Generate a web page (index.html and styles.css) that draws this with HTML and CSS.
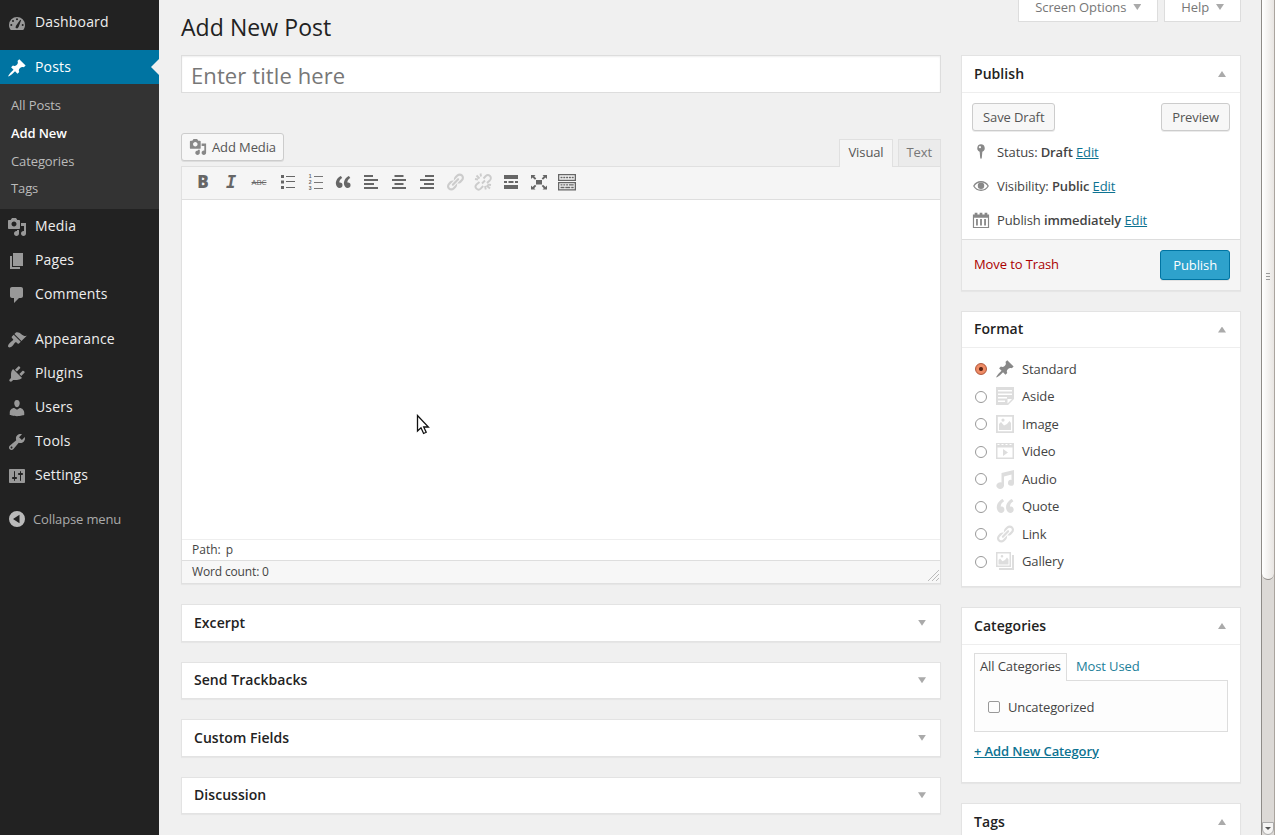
FILE: index.html
```
<!DOCTYPE html>
<html lang="en">
<head>
    <meta charset="UTF-8">
    <meta name="viewport" content="width=device-width, initial-scale=1.0">
    <title>Add New Post</title>
    <link rel="stylesheet" href="styles.css">
</head>
<body>
    <!-- icon set -->
    <svg class="sprite" xmlns="http://www.w3.org/2000/svg">
        <symbol id="dashboard" viewBox="0 0 20 20"><path fill-rule="evenodd" d="M3.8 17h12.4c1.1-1.4 1.8-3.1 1.8-5a8 8 0 0 0-16 0c0 1.9.7 3.600 1.800 5zM9 6.200a1 1 0 1 1 2 0a1 1 0 1 1-2 0zM5 8a1 1 0 1 1 2 0a1 1 0 1 1-2 0zM3.300 12a1 1 0 1 1 2 0a1 1 0 1 1-2 0zM14.700 12a1 1 0 1 1 2 0a1 1 0 1 1-2 0zM8.500 14.500l.5-1.800L13.200 6.800l.9.400L11.700 13.800l-1 1.500h-1.600z"/></symbol>
        <symbol id="pin" viewBox="0 0 20 20"><path d="M10.440 3.020l1.820-1.820 6.360 6.350-1.830 1.820c-1.050-.68-2.480-.57-3.410.36l-.75.75c-.92.93-1.040 2.350-.35 3.410l-1.830 1.820-2.410-2.410-2.800 2.790c-.42.42-3.380 2.710-3.800 2.290s1.860-3.390 2.280-3.810l2.790-2.790L4.100 9.360l1.830-1.820c1.050.69 2.480.57 3.400-.36l.75-.75c.93-.92 1.050-2.350.36-3.410z"/></symbol>
        <symbol id="media" viewBox="0 0 20 20"><path d="M13 11V4c0-.55-.45-1-1-1h-1.670L9 1H5L3.670 3H2c-.55 0-1 .45-1 1v7c0 .55.45 1 1 1h10c.55 0 1-.45 1-1zM7 4.500c1.380 0 2.500 1.120 2.500 2.500S8.380 9.500 7 9.500 4.500 8.380 4.500 7 5.620 4.500 7 4.500zM14 6h5v10.500c0 1.380-1.120 2.500-2.500 2.500S14 17.880 14 16.500s1.120-2.500 2.500-2.500c.17 0 .34.02.5.05V9h-3V6zm-4 8.050V13h2v3.500c0 1.380-1.120 2.500-2.500 2.500S7 17.880 7 16.500 8.120 14 9.500 14c.17 0 .34.02.5.05z"/></symbol>
        <symbol id="page" viewBox="0 0 20 20"><path d="M6 15V2h10v13H6zm-1 1h8v2H3V5h2v11z"/></symbol>
        <symbol id="comment" viewBox="0 0 20 20"><path d="M5 2h9c1.100 0 2 .9 2 2v7c0 1.100-.9 2-2 2h-2l-5 5v-5H5c-1.100 0-2-.9-2-2V4c0-1.100.9-2 2-2z"/></symbol>
        <symbol id="brush" viewBox="0 0 20 20"><path d="M14.480 11.060L7.410 3.990l1.500-1.500c.5-.56 2.300-.47 3.510.32 1.210.8 1.430 1.280 2.910 2.100 1.180.64 2.450 1.260 4.450.85zm-.71.71L6.700 4.700 4.930 6.470c-.39.39-.39 1.020 0 1.410l1.060 1.060c.39.39.39 1.030 0 1.420-.6.6-1.430 1.110-2.210 1.690-.35.26-.7.53-1.010.84C1.430 14.230.4 16.080 1.400 17.070c.99 1 2.840-.03 4.180-1.360.31-.31.58-.66.85-1.020.57-.78 1.080-1.610 1.690-2.210.39-.39 1.020-.39 1.410 0l1.060 1.060c.39.39 1.020.39 1.410 0z"/></symbol>
        <symbol id="plug" viewBox="0 0 20 20"><path d="M13.110 4.360L9.870 7.600 8 5.730l3.240-3.240c.35-.34 1.050-.2 1.560.32.52.51.66 1.210.31 1.550zm-8 1.770l.91-1.120 9.010 9.010-1.190.84c-.71.71-2.630 1.160-3.820 1.160H6.140L4.900 17.260c-.59.59-1.540.59-2.120 0-.59-.58-.59-1.530 0-2.120l1.240-1.240v-3.880c0-1.130.4-3.190 1.090-3.890zm7.260 3.970l3.240-3.240c.34-.35 1.040-.21 1.550.31.52.51.66 1.210.31 1.550l-3.240 3.250z"/></symbol>
        <symbol id="user" viewBox="0 0 20 20"><path d="M10 9.250c-2.270 0-2.730-3.440-2.730-3.440C7 4.020 7.820 2 9.970 2c2.160 0 2.980 2.020 2.710 3.810 0 0-.41 3.440-2.680 3.440zm0 2.570L12.720 10c2.390 0 4.520 2.330 4.520 4.530v2.490s-3.650 1.130-7.240 1.130c-3.650 0-7.240-1.130-7.240-1.130v-2.490c0-2.250 1.940-4.480 4.470-4.480z"/></symbol>
        <symbol id="wrench" viewBox="0 0 20 20"><path d="M16.680 9.770c-1.340 1.340-3.300 1.670-4.950.99l-5.410 6.520c-.99.99-2.590.99-3.580 0s-.99-2.590 0-3.570l6.520-5.420c-.68-1.650-.35-3.610.99-4.950 1.280-1.280 3.120-1.620 4.720-1.060l-2.890 2.890 2.820 2.820 2.860-2.870c.53 1.580.18 3.390-1.080 4.650zM3.810 16.210c.4.39 1.040.39 1.430 0 .4-.4.4-1.040 0-1.430-.39-.4-1.030-.4-1.430 0-.39.39-.39 1.030 0 1.430z"/></symbol>
        <symbol id="sliders" viewBox="0 0 20 20"><path d="M18 16V4c0-.55-.45-1-1-1H3c-.55 0-1 .45-1 1v12c0 .55.45 1 1 1h14c.55 0 1-.45 1-1zM8 11h1c.55 0 1 .45 1 1s-.45 1-1 1H8v1.500c0 .28-.22.5-.5.5s-.5-.22-.5-.5V13H6c-.55 0-1-.45-1-1s.45-1 1-1h1V5.500c0-.28.22-.5.5-.5s.5.22.5.5V11zm5-2h-1c-.55 0-1-.45-1-1s.45-1 1-1h1V5.500c0-.28.22-.5.5-.5s.5.22.5.5V7h1c.55 0 1 .45 1 1s-.45 1-1 1h-1v5.500c0 .28-.22.5-.5.5s-.5-.22-.5-.5V9z"/></symbol>
        <symbol id="collapse" viewBox="0 0 20 20"><path fill-rule="evenodd" d="M10 2a8 8 0 1 0 0 16a8 8 0 0 0 0-16zM12.500 5.800v8.400L6 10z"/></symbol>
        <symbol id="list-ul" viewBox="0 0 20 20"><path d="M4 3h3v3H4zM4 8.500h3v3H4zM4 14h3v3H4zM9 4h9v1H9zM9 9h9v1H9zM9 15h9v1H9z"/></symbol>
        <symbol id="quote" viewBox="0 0 20 20"><path d="M9.490 13.220c0-.74-.2-1.380-.61-1.900-.62-.78-1.830-.88-2.530-.72-.29-1.650 1.110-3.750 2.920-4.650L7.880 4c-2.730 1.300-5.420 4.280-4.960 8.050C3.210 14.430 4.590 16 6.540 16c.85 0 1.560-.25 2.120-.75s.83-1.180.83-2.030zm8.050 0c0-.74-.2-1.380-.61-1.900-.63-.78-1.830-.88-2.530-.72-.29-1.650 1.110-3.750 2.920-4.650L15.930 4c-2.730 1.300-5.410 4.280-4.950 8.050.29 2.380 1.660 3.950 3.610 3.950.85 0 1.560-.25 2.120-.75s.83-1.180.83-2.030z"/></symbol>
        <symbol id="align-left" viewBox="0 0 20 20"><path d="M3 3h9v2H3zM3 7h14v2H3zM3 11h10v2H3zM3 15h14v2H3z"/></symbol>
        <symbol id="align-center" viewBox="0 0 20 20"><path d="M5.500 3h9v2h-9zM3 7h14v2H3zM5.500 11h9v2h-9zM3 15h14v2H3z"/></symbol>
        <symbol id="align-right" viewBox="0 0 20 20"><path d="M8 3h9v2H8zM3 7h14v2H3zM7 11h10v2H7zM3 15h14v2H3z"/></symbol>
        <symbol id="link" viewBox="0 0 20 20"><path d="M17.740 2.760c1.680 1.690 1.680 4.410 0 6.100l-1.530 1.520c-1.120 1.120-2.700 1.470-4.140 1.090l2.620-2.610.76-.77.76-.76c.84-.84.84-2.200 0-3.040-.84-.85-2.200-.85-3.040 0l-.77.76-3.380 3.380c-.37-1.440-.02-3.020 1.100-4.140l1.520-1.530c1.690-1.680 4.420-1.680 6.100 0zM8.590 13.430l5.340-5.340c.42-.42.42-1.100 0-1.520-.44-.43-1.130-.39-1.530 0l-5.330 5.340c-.42.42-.42 1.100 0 1.520.44.43 1.130.39 1.520 0zm-.76 2.290l4.140-4.150c.38 1.440.03 3.020-1.090 4.140l-1.520 1.530c-1.690 1.680-4.410 1.680-6.100 0-1.680-1.680-1.680-4.420 0-6.100l1.530-1.520c1.120-1.120 2.700-1.470 4.140-1.100l-4.140 4.150c-.85.84-.85 2.200 0 3.050.84.84 2.200.84 3.040 0z"/></symbol>
        <symbol id="unlink" viewBox="0 0 20 20"><path fill="none" stroke="currentColor" stroke-width="1.900" d="M10.500 6.500l2.300-2.500a2.900 2.900 0 0 1 4.200 4.200l-3 2.800M6.500 10l-3 2.500a2.900 2.900 0 0 0 4.200 4.200l2.500-2.700M9 11.500l3-3M2 7l3 .5M3.500 3.500l3 3M7.500 1.500l.5 3M12 14l.8 3.500M13.500 13.500l3.500 3M14.500 12.500l3.500.5"/></symbol>
        <symbol id="more" viewBox="0 0 20 20"><path d="M3 3h14v4H3zM3 9h3v2H3zM7.500 9h5v2h-5zM14 9h3v2h-3zM3 13h14v4H3z"/></symbol>
        <symbol id="fullscreen" viewBox="0 0 20 20"><path d="M7 8h6v4.500H7zM2 3h4.500L5.200 4.300 7.300 6.500 6 7.800 3.500 5.500 2 7zM18 3v4l-1.500-1.500L14 7.800l-1.300-1.300 2.100-2.200L13.500 3zM2 17.500v-4L3.500 15 6 12.700 7.300 14l-2.100 2.200 1.300 1.300zM18 17.500h-4.500l1.300-1.300-2.100-2.200 1.300-1.300 2.500 2.300 1.500-1.500z"/></symbol>
        <symbol id="kitchensink" viewBox="0 0 20 20"><path fill-rule="evenodd" d="M1 2h18v7H1zM2.300 3.300v4.400h15.400V3.300zM3.500 4.800h2v1.500h-2zM6.300 4.800h2v1.500h-2zM9.100 4.800h2v1.500h-2zM11.900 4.800h2v1.500h-2zM14.700 4.800h2v1.500h-2zM1 10h18v8.500H1zM2.300 11.300v5.900h15.400v-5.900zM3.500 12.200h2v1.400h-2zM6.300 12.200h2v1.400h-2zM9.100 12.200h2v1.400h-2zM11.900 12.200h4.800v1.400h-4.800zM3.500 14.800h4v1.400h-4zM8.300 14.800h5v1.400h-5zM14.200 14.800h2.500v1.400h-2.500z"/></symbol>
        <symbol id="status" viewBox="0 0 20 20"><path fill-rule="evenodd" d="M10 1.500a4.200 4.200 0 0 1 1.500 8.100l-.6 6.900-.9 1.500-.9-1.500-.6-6.900A4.200 4.200 0 0 1 10 1.500zM8.200 3.500a1.200 1.200 0 1 0 1.800 1.300a1.200 1.200 0 0 0-1.800-1.300z"/></symbol>
        <symbol id="eye" viewBox="0 0 20 20"><path fill="none" stroke="currentColor" stroke-width="1.400" d="M2 10c3.500-6.300 12.500-6.300 16 0c-3.500 6.300-12.500 6.300-16 0z"/><circle cx="10" cy="9.800" r="3.600"/></symbol>
        <symbol id="calendar" viewBox="0 0 20 20"><path fill-rule="evenodd" d="M1 4h2V2h3v2h2.500V2h3v2H14V2h3v2h2v15H1zM2.300 7.500v10.200h15.400V7.500zM4.500 9h2v7h-2zM9 9h2v7H9zM13.500 9h2v7h-2z"/></symbol>
        <symbol id="aside" viewBox="0 0 20 20"><path fill-rule="evenodd" d="M1 1h18v12l-6 6H1zM3 4v1.500h14V4zM3 7.500V9h14V7.500zM3 11v1.500h9V11zM3 14.500V16h7v-1.500zM12.500 13v4.500L17 13z"/></symbol>
        <symbol id="image" viewBox="0 0 20 20"><path fill-rule="evenodd" d="M1 1h18v18H1zM2.800 2.800v14.400h14.400V2.800zM4 16V10l2-2 3 3.500 3-1.500 2.500-3 1.500 2v7zM8 4.500a1.600 1.600 0 1 1 0 3.200a1.600 1.600 0 0 1 0-3.200z"/></symbol>
        <symbol id="video" viewBox="0 0 20 20"><path fill-rule="evenodd" d="M1 2h18v16H1zM2.500 3v1h2V3zM6.500 3v1h2V3zM10.500 3v1h2V3zM14.500 3v1h2V3zM2.500 6.500v10h15v-10zM8 8l5 3.500L8 15z"/></symbol>
        <symbol id="audio" viewBox="0 0 20 20"><path d="M19 1v12.800a3 3 0 1 1-2.500-2.900V5.500L9 7.500v9a3.800 3.300 0 1 1-2.500-3V4z"/></symbol>
        <symbol id="gallery" viewBox="0 0 20 20"><path fill-rule="evenodd" d="M1 1h15v15H1zM2.500 2.500v12h12v-12zM3.500 13.500V9L5 7.500l2.500 2.800L10 9l2-2.500 1.500 2v5zM7 4a1.300 1.300 0 1 1 0 2.600A1.300 1.300 0 0 1 7 4zM17 4h2v15H4v-2h13z"/></symbol>
    </svg>

    <nav class="menu">
        <a class="menu-item"><svg class="icon"><use href="#dashboard"/></svg>Dashboard</a>
        <a class="menu-item active gap"><svg class="icon"><use href="#pin"/></svg>Posts</a>
        <div class="submenu">
            <a>All Posts</a>
            <a class="current">Add New</a>
            <a>Categories</a>
            <a>Tags</a>
        </div>
        <a class="menu-item"><svg class="icon"><use href="#media"/></svg>Media</a>
        <a class="menu-item"><svg class="icon"><use href="#page"/></svg>Pages</a>
        <a class="menu-item"><svg class="icon"><use href="#comment"/></svg>Comments</a>
        <a class="menu-item gap"><svg class="icon"><use href="#brush"/></svg>Appearance</a>
        <a class="menu-item"><svg class="icon"><use href="#plug"/></svg>Plugins</a>
        <a class="menu-item"><svg class="icon"><use href="#user"/></svg>Users</a>
        <a class="menu-item"><svg class="icon"><use href="#wrench"/></svg>Tools</a>
        <a class="menu-item"><svg class="icon"><use href="#sliders"/></svg>Settings</a>
        <a class="menu-item collapse"><svg class="icon"><use href="#collapse"/></svg>Collapse menu</a>
    </nav>

    <main class="content">
        <header class="page-head">
            <h1>Add New Post</h1>
            <div class="screen-links">
                <a>Screen Options<span class="arrow down"></span></a>
                <a>Help<span class="arrow down"></span></a>
            </div>
        </header>

        <div class="columns">
            <section class="main-col">
                <input class="title-input" type="text" placeholder="Enter title here">

                <div class="editor-tools">
                    <button class="button add-media"><svg class="icon"><use href="#media"/></svg>Add Media</button>
                    <div class="tabs">
                        <a class="tab tab-active">Visual</a>
                        <a class="tab">Text</a>
                    </div>
                </div>

                <div class="editor">
                    <div class="toolbar">
                        <span class="tool bold">B</span>
                        <span class="tool italic">I</span>
                        <span class="tool strike">ABC</span>
                        <span class="tool"><svg class="icon"><use href="#list-ul"/></svg></span>
                        <span class="tool numbered">
                            <span>1</span><i></i>
                            <span>2</span><i></i>
                            <span>3</span><i></i>
                        </span>
                        <span class="tool"><svg class="icon"><use href="#quote"/></svg></span>
                        <span class="tool"><svg class="icon"><use href="#align-left"/></svg></span>
                        <span class="tool"><svg class="icon"><use href="#align-center"/></svg></span>
                        <span class="tool"><svg class="icon"><use href="#align-right"/></svg></span>
                        <span class="tool disabled"><svg class="icon"><use href="#link"/></svg></span>
                        <span class="tool disabled"><svg class="icon"><use href="#unlink"/></svg></span>
                        <span class="tool"><svg class="icon"><use href="#more"/></svg></span>
                        <span class="tool"><svg class="icon"><use href="#fullscreen"/></svg></span>
                        <span class="tool"><svg class="icon"><use href="#kitchensink"/></svg></span>
                    </div>
                    <div class="canvas"></div>
                    <div class="path">Path: <span>p</span></div>
                    <div class="word-count">
                        <span>Word count: 0</span>
                        <svg class="grip" viewBox="0 0 12 12"><path d="M1 12L12 1M5 12l7-7M9 12l3-3"/></svg>
                    </div>
                </div>

                <div class="box closed"><h3>Excerpt</h3><span class="arrow down"></span></div>
                <div class="box closed"><h3>Send Trackbacks</h3><span class="arrow down"></span></div>
                <div class="box closed"><h3>Custom Fields</h3><span class="arrow down"></span></div>
                <div class="box closed"><h3>Discussion</h3><span class="arrow down"></span></div>
            </section>

            <aside class="side-col">
                <div class="box publish">
                    <div class="box-head"><h3>Publish</h3><span class="arrow up"></span></div>
                    <div class="publish-actions">
                        <button class="button">Save Draft</button>
                        <button class="button">Preview</button>
                    </div>
                    <div class="publish-row"><svg class="icon"><use href="#status"/></svg><p>Status: <b>Draft</b> <a>Edit</a></p></div>
                    <div class="publish-row"><svg class="icon"><use href="#eye"/></svg><p>Visibility: <b>Public</b> <a>Edit</a></p></div>
                    <div class="publish-row"><svg class="icon"><use href="#calendar"/></svg><p>Publish <b>immediately</b> <a>Edit</a></p></div>
                    <div class="publish-foot">
                        <a class="trash">Move to Trash</a>
                        <button class="button primary">Publish</button>
                    </div>
                </div>

                <div class="box format">
                    <div class="box-head"><h3>Format</h3><span class="arrow up"></span></div>
                    <div class="formats">
                        <label class="checked"><span class="radio"></span><svg class="icon"><use href="#pin"/></svg>Standard</label>
                        <label><span class="radio"></span><svg class="icon"><use href="#aside"/></svg>Aside</label>
                        <label><span class="radio"></span><svg class="icon"><use href="#image"/></svg>Image</label>
                        <label><span class="radio"></span><svg class="icon"><use href="#video"/></svg>Video</label>
                        <label><span class="radio"></span><svg class="icon"><use href="#audio"/></svg>Audio</label>
                        <label><span class="radio"></span><svg class="icon quote"><use href="#quote"/></svg>Quote</label>
                        <label><span class="radio"></span><svg class="icon"><use href="#link"/></svg>Link</label>
                        <label><span class="radio"></span><svg class="icon"><use href="#gallery"/></svg>Gallery</label>
                    </div>
                </div>

                <div class="box categories">
                    <div class="box-head"><h3>Categories</h3><span class="arrow up"></span></div>
                    <div class="cat-tabs">
                        <a class="cat-tab-active">All Categories</a>
                        <a>Most Used</a>
                    </div>
                    <div class="cat-list"><span class="checkbox"></span>Uncategorized</div>
                    <a class="add-cat">+ Add New Category</a>
                </div>

                <div class="box">
                    <div class="box-head"><h3>Tags</h3><span class="arrow up"></span></div>
                </div>
            </aside>
        </div>
    </main>

    <div class="scrollbar">
        <div class="thumb"><i></i><i></i><i></i></div>
        <div class="scroll-button"><span></span></div>
    </div>

    <svg class="cursor" viewBox="0 0 14 21"><path d="M1.500 1.500v15.500l3.500-3.200 2.600 5.700 2.600-1.200-2.500-5.300h4.700z"/></svg>
</body>
</html>
```
FILE: styles.css
```
* {
    box-sizing: border-box;
}
body {
    display: flex;
    height: 835px;
    margin: 0;
    overflow: hidden;
    background: #f0f0f0;
    color: #444;
    font: 13px/18px "Open Sans", sans-serif;
    letter-spacing: -.11px;
}
h1, h3, p {
    margin: 0;
}
b, h3 {
    font-weight: 600;
}
.sprite {
    position: absolute;
    width: 0;
    height: 0;
}
.icon {
    flex: none;
    width: 20px;
    height: 20px;
    fill: currentColor;
}

/* admin menu */
.menu {
    flex: none;
    width: 159px;
    padding-top: 5px;
    background: #222;
}
.menu-item {
    display: flex;
    align-items: center;
    height: 34px;
    padding-left: 7px;
    color: #eee;
    font-size: 14px;
    letter-spacing: .16px;
}
.menu-item .icon {
    margin: 2px 8px 0 0;
    color: #999;
}
.gap {
    margin-top: 11px;
}
.menu .active {
    position: relative;
    background: #0074a2;
    color: #fff;
}
.active .icon {
    color: #fff;
}
.active::after {
    content: "";
    position: absolute;
    right: 0;
    top: 9px;
    border: 8px solid transparent;
    border-left: 0;
    border-right-color: #f0f0f0;
}
.submenu {
    height: 125px;
    padding: 7px 11px;
    background: #333;
}
.submenu a {
    display: block;
    height: 27.750px;
    line-height: 28px;
    color: #bbb;
}
.submenu .current {
    color: #fff;
    font-weight: 600;
}
.collapse {
    margin-top: 10px;
    color: #aaa;
    font-size: 13px;
    letter-spacing: -.13px;
}
.collapse .icon {
    margin: 0 6px 0 0;
    color: #bbb;
}

/* page */
.content {
    flex: none;
    width: 1082px;
    padding-left: 22px;
}
.page-head {
    display: flex;
    justify-content: space-between;
    height: 55px;
}
h1 {
    padding-top: 12px;
    color: #222;
    font-size: 23px;
    font-weight: 400;
    line-height: 30px;
    letter-spacing: .07px;
}
.screen-links {
    display: flex;
    gap: 6px;
}
.screen-links a {
    display: flex;
    height: 22px;
    padding: 0 16px;
    border: 1px solid #ddd;
    border-top: 0;
    background: #fff;
    color: #777;
    line-height: 15px;
}
.screen-links .arrow {
    margin: 4px 0 0 7px;
}
.arrow {
    width: 8px;
    height: 6px;
    background: #aaa;
}
.down {
    clip-path: polygon(0 0, 100% 0, 50% 100%);
}
.up {
    clip-path: polygon(50% 0, 100% 100%, 0 100%);
}
.columns {
    display: flex;
    gap: 20px;
}
.main-col {
    width: 760px;
}
.side-col {
    width: 280px;
}
.title-input {
    display: block;
    width: 100%;
    height: 38px;
    padding: 1px 9px 0;
    border: 1px solid #ddd;
    background: #fff;
    box-shadow: inset 0 1px 2px rgba(0, 0, 0, .07);
    font: 22px "Open Sans", sans-serif;
    letter-spacing: .1px;
}
.title-input::placeholder {
    color: #777;
}
.button {
    height: 28px;
    padding: 0 10px;
    border: 1px solid #ccc;
    border-radius: 3px;
    background: #f7f7f7;
    box-shadow: 0 1px 0 rgba(0, 0, 0, .08);
    color: #555;
    font: 13px/26px "Open Sans", sans-serif;
    letter-spacing: -.11px;
    white-space: nowrap;
}

/* editor */
.editor-tools {
    display: flex;
    justify-content: space-between;
    height: 74px;
    padding-top: 40px;
}
.add-media {
    display: flex;
    align-items: center;
    padding: 0 7px;
}
.add-media .icon {
    width: 18px;
    height: 18px;
    margin-right: 5px;
    color: #888;
}
.tabs {
    display: flex;
    gap: 5px;
    padding-top: 6px;
}
.tab {
    height: 27px;
    padding: 0 8px;
    border: 1px solid #e0e0e0;
    border-bottom: 0;
    background: #ebebeb;
    color: #777;
    line-height: 25px;
}
.tab-active {
    position: relative;
    height: 28px;
    background: #f5f5f5;
    color: #555;
}
.editor {
    height: 418px;
    margin: -1px 0 20px;
    border: 1px solid #e0e0e0;
    background: #fff;
    box-shadow: 0 1px 1px rgba(0, 0, 0, .04);
}
.toolbar {
    display: flex;
    gap: 8px;
    height: 33px;
    padding: 5px 11px;
    border-bottom: 1px solid #dedede;
    background: #f5f5f5;
    color: #666;
}
.tool {
    width: 20px;
    height: 20px;
    text-align: center;
    line-height: 20px;
}
.tool .icon {
    display: block;
}
.bold {
    font-size: 17px;
    font-weight: 800;
}
.italic {
    font: italic bold 17px/20px "DejaVu Sans Mono", monospace;
}
.strike {
    font-size: 8px;
    letter-spacing: -.1px;
    text-decoration: line-through;
}
.numbered {
    display: grid;
    grid-template-columns: 4px 9px;
    grid-auto-rows: 6px;
    gap: 0 2px;
    padding: 1px 3px;
    align-items: center;
    font: bold 5px/6px "Liberation Sans", sans-serif;
}
.numbered i {
    height: 1px;
    background: #777;
}
.disabled {
    color: #ccc;
}
.canvas {
    height: 339px;
}
.path {
    height: 21px;
    padding-left: 10px;
    border-top: 1px solid #eee;
    font-size: 12px;
    line-height: 20px;
    letter-spacing: 0;
}
.path span {
    margin-left: 2px;
}
.word-count {
    display: flex;
    justify-content: space-between;
    height: 23px;
    padding-left: 10px;
    border-top: 1px solid #dedede;
    background: #f7f7f7;
    font-size: 12px;
    line-height: 21px;
    letter-spacing: -.15px;
}
.grip {
    width: 12px;
    height: 12px;
    margin: 8px 1px 0 0;
    fill: none;
    stroke: #bbb;
}

/* boxes */
.box {
    margin-bottom: 20px;
    border: 1px solid #e3e3e3;
    background: #fff;
    box-shadow: 0 1px 1px rgba(0, 0, 0, .04);
}
h3 {
    color: #222;
    font-size: 14px;
    line-height: 19px;
    letter-spacing: .05px;
}
.closed, .box-head {
    display: flex;
    align-items: center;
    justify-content: space-between;
    padding: 0 14px 0 12px;
}
.closed {
    height: 37.500px;
}
.closed h3 {
    margin-top: -1px;
}
.box-head {
    height: 37px;
    border-bottom: 1px solid #eee;
}
.box-head h3 {
    margin-top: -2px;
}
.publish {
    height: 236px;
}
.publish-actions {
    display: flex;
    justify-content: space-between;
    padding: 10px 10px 4px;
}
.publish-row {
    display: flex;
    align-items: center;
    gap: 7px;
    height: 34px;
    padding-left: 10px;
}
.publish-row .icon {
    width: 18px;
    height: 18px;
    color: #888;
}
.publish-row a {
    color: #0d7392;
    text-decoration: underline;
}
.publish-foot {
    display: flex;
    align-items: center;
    justify-content: space-between;
    height: 51px;
    margin-top: 2px;
    padding: 0 10px 0 12px;
    border-top: 1px solid #ddd;
    background: #f5f5f5;
}
.trash {
    margin-top: -2px;
    color: #a00;
}
.primary {
    height: 30px;
    padding: 0 12px;
    border-color: #0074a2;
    background: #2ea2cc;
    color: #fff;
}
.format {
    height: 276px;
}
.format .box-head {
    height: 36px;
}
.formats {
    padding: 7px 13px;
}
.formats label {
    display: flex;
    align-items: center;
    height: 27.500px;
}
.formats .icon {
    margin: 0 7px 0 8px;
    color: #ddd;
}
.formats .checked .icon {
    color: #888;
}
.formats .quote {
    transform: scale(1.150);
}
.radio {
    width: 12px;
    height: 12px;
    margin-top: 1px;
    border: 1px solid #999;
    border-radius: 50%;
}
.checked .radio {
    border-color: #b1583b;
    background: radial-gradient(circle, #5b2413 0 1.500px, #ef8c66 2.500px 4px, #e9835e 5px);
}
.categories {
    height: 176px;
}
.cat-tabs {
    display: flex;
    height: 36px;
    padding: 8px 12px 0;
    line-height: 26px;
    color: #21809a;
}
.cat-tabs a {
    padding-left: 9px;
}
.cat-tabs .cat-tab-active {
    position: relative;
    height: 28px;
    padding: 0 5px;
    border: 1px solid #ddd;
    border-bottom: 0;
    background: #fdfdfd;
    color: #444;
    line-height: 25px;
}
.cat-list {
    display: flex;
    align-items: center;
    height: 52px;
    margin: -1px 12px 10px;
    padding: 2px 0 0 13px;
    border: 1px solid #ddd;
    background: #fdfdfd;
}
.checkbox {
    width: 12px;
    height: 12px;
    margin-right: 8px;
    border: 1px solid #999;
    border-radius: 2px;
}
.add-cat {
    margin-left: 12px;
    color: #0d7392;
    font-weight: 600;
    text-decoration: underline;
}

/* window scrollbar */
.scrollbar {
    display: flex;
    flex-direction: column;
    justify-content: space-between;
    flex: none;
    width: 14px;
    margin-left: 20px;
    border-left: 1px solid #8e8b87;
    border-right: 1px solid #aaa49e;
    background: #dcd9d6;
}
.thumb {
    display: flex;
    flex-direction: column;
    align-items: center;
    gap: 2px;
    height: 580px;
    padding-top: 273px;
    border-bottom: 1px solid #8e8b87;
    border-radius: 0 0 6px 6px;
    background: linear-gradient(90deg, #fff, #e8e5e2);
}
.thumb i {
    width: 4px;
    height: 1px;
    background: #999;
}
.scroll-button {
    display: flex;
    align-items: center;
    justify-content: center;
    height: 13px;
    border: 1px solid #aaa;
    border-radius: 0 0 6px 6px;
    background: #f5f4f3;
}
.scroll-button span {
    border: 3px solid transparent;
    border-top-color: #555;
    border-bottom: 0;
}
.cursor {
    position: absolute;
    left: 416px;
    top: 414px;
    width: 14px;
    height: 21px;
    fill: #fff;
    stroke: #111;
    stroke-width: 1.300;
}
```
